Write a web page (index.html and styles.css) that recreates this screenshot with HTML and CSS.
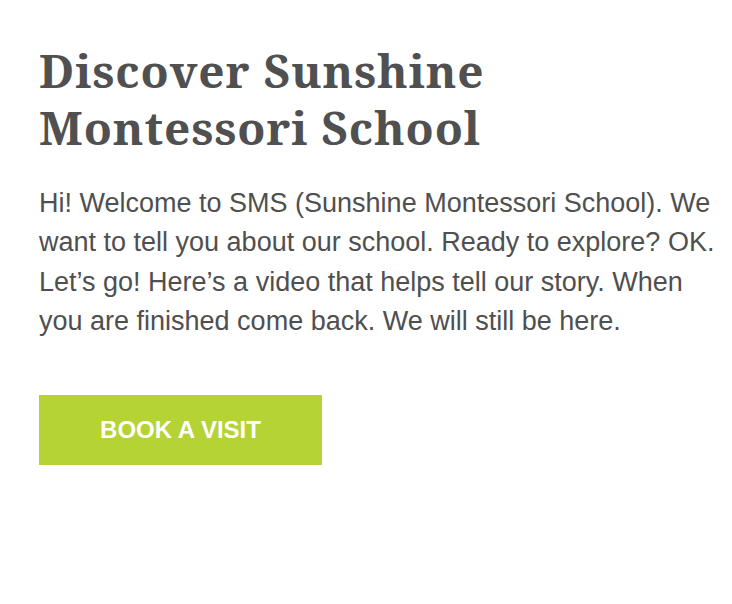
FILE: index.html
```html
<!DOCTYPE html>
<html>
<head>
<meta charset="utf-8">
<link rel="stylesheet" href="styles.css">
</head>
<body>
<main class="hero">
  <h1 class="title">Discover Sunshine Montessori School</h1>
  <p class="intro">Hi! Welcome to SMS (Sunshine Montessori School). We want to tell you about our school. Ready to explore? OK. Let’s go! Here’s a video that helps tell our story. When you are finished come back. We will still be here.</p>
  <a class="btn" href="#">BOOK A VISIT</a>
</main>
</body>
</html>
```

FILE: styles.css
```css
html, body {
  margin: 0;
  padding: 0;
  background: #ffffff;
}
.hero {
  padding: 42px 0 0 39px;
  width: 682px;
}
.title {
  margin: 0;
  font-family: "Noto Serif", "DejaVu Serif", serif;
  font-weight: 700;
  font-size: 46px;
  line-height: 57px;
  letter-spacing: 0.9px;
  color: #505050;
  width: 470px;
}
.intro {
  margin: 28px 0 0 0;
  font-family: "Liberation Sans", Arial, sans-serif;
  font-size: 27px;
  line-height: 39.3px;
  color: #4f4f4f;
}
.btn {
  display: inline-flex;
  align-items: center;
  justify-content: center;
  margin-top: 54px;
  width: 283px;
  height: 70px;
  background: #b5d334;
  color: #ffffff;
  font-family: "Liberation Sans", Arial, sans-serif;
  font-weight: 700;
  font-size: 24px;
  text-decoration: none;
}
```
